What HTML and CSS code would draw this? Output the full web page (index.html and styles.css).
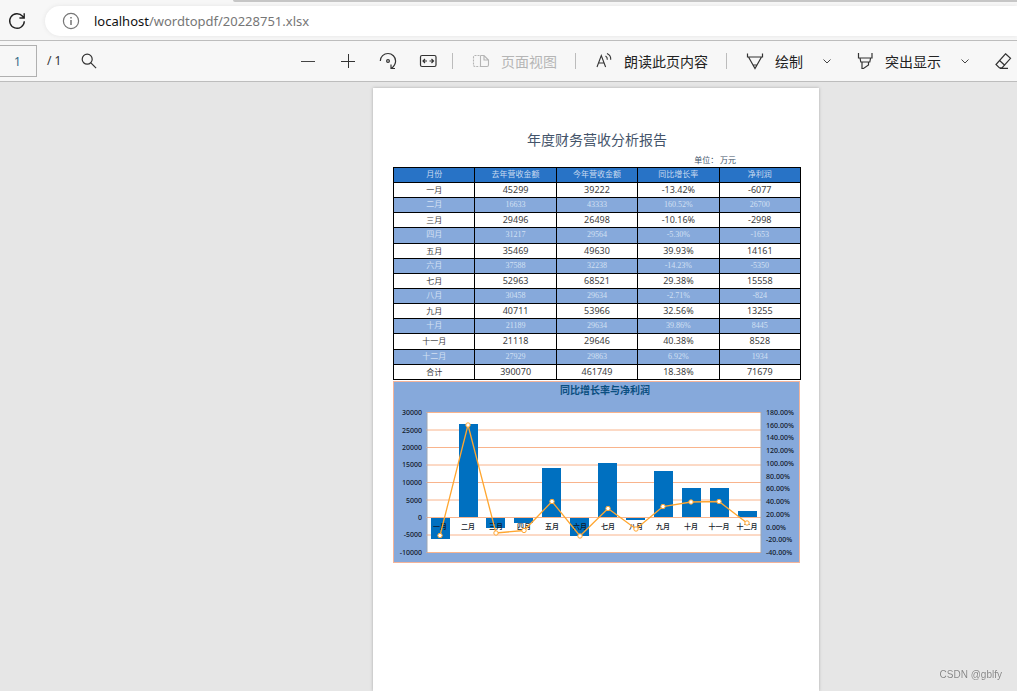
FILE: index.html
```
<!DOCTYPE html>
<html lang="zh-CN">
<head>
<meta charset="utf-8">
<title>20228751.xlsx</title>
<link rel="stylesheet" href="styles.css">
</head>
<body>
<header class="browser">
  <div class="tab-edge"></div>
  <div class="address-row">
    <button class="reload" aria-label="刷新">
      <svg width="20" height="20" viewBox="0 0 20 20" fill="none" stroke="#222" stroke-width="1.4"><path d="M17.3 10.2A7.3 7.3 0 1 1 15.6 5.3L17 6.7M17.2 2.2V7H12.4"/></svg>
    </button>
    <div class="address">
      <svg width="18" height="18" viewBox="0 0 18 18" fill="none" stroke="#767676" stroke-width="1.2"><circle cx="9" cy="9" r="7.6"/><path d="M9 8v5M9 5v1.5" stroke-width="1.5"/></svg>
      <span class="url"><span class="host">localhost</span>/wordtopdf/20228751.xlsx</span>
    </div>
  </div>
</header>

<nav class="toolbar">
  <div class="paging">
    <input class="page-input" type="text" value="1" aria-label="页码">
    <span class="page-total">/ 1</span>
    <button class="search" aria-label="查找"><svg width="16" height="16" viewBox="0 0 16 16" fill="none" stroke="#333" stroke-width="1.2"><circle cx="6.2" cy="6.2" r="5"/><path d="M9.9 9.9l5.2 5.2"/></svg></button>
  </div>
  <button class="tool icon-only" aria-label="缩小"><svg width="18" height="18" viewBox="0 0 18 18" fill="none" stroke="#444"><path d="M2 9.5h14"/></svg></button>
  <button class="tool icon-only" aria-label="放大"><svg width="18" height="18" viewBox="0 0 18 18" fill="none" stroke="#333"><path d="M2 9.5h14M9.5 2v14"/></svg></button>
  <button class="tool icon-only" aria-label="旋转"><svg width="18" height="18" viewBox="0 0 18 18" fill="none" stroke="#333" stroke-width="1.2"><path d="M1.300 9C1.300 4.600 4.800 1.500 9 1.500S16.600 5 16.600 9c0 3-1.200 5-4 7.300M12 12.500v4h4"/><circle cx="9" cy="9" r="1.400"/></svg></button>
  <button class="tool icon-only" aria-label="适应宽度"><svg width="18" height="18" viewBox="0 0 18 18" fill="none" stroke="#333" stroke-width="1.2"><rect x="1.500" y="3.500" width="15.500" height="11" rx="1.500"/><path d="M8 9H4M6 7L4 9l2 2M10.500 9h4M12.500 7l2 2-2 2"/></svg></button>
  <span class="separator"></span>
  <button class="tool" disabled><svg width="18" height="18" viewBox="0 0 18 18" fill="none" stroke="#b5b5b5" stroke-width="1.1"><path d="M7.500 3.500H3a1.500 1.500 0 0 0-1.500 1.500v8A1.500 1.500 0 0 0 3 14.500h4.500" stroke-dasharray="2 1"/><path d="M8.500 3.500v11h6.500a1.500 1.500 0 0 0 1.500-1.500V8l-4.500-4.500H8.500M12 3.500V8h4.500"/></svg>页面视图</button>
  <span class="separator"></span>
  <button class="tool"><svg width="18" height="18" viewBox="0 0 18 18" fill="none" stroke="#333" stroke-width="1.1"><path d="M2 15L6.300 3.500 10.600 15M3.500 11h5.700M10.500 4c1.400.8 2 2 1.800 3.700M12 1.500c2.800 1.400 4 3.700 3.700 6.200"/></svg>朗读此页内容</button>
  <span class="separator"></span>
  <button class="tool split"><svg width="18" height="18" viewBox="0 0 18 18" fill="none" stroke="#333" stroke-width="1.2"><path d="M1.500 1.500V5h15V1.500M2.500 5L9 16.500 15.500 5M7 13h4"/></svg>绘制</button>
  <button class="chevron" aria-label="绘制选项"><svg width="10" height="10" viewBox="0 0 10 10" fill="none" stroke="#444"><path d="M1.500 3.500L5 7l3.500-3.500"/></svg></button>
  <button class="tool split highlight"><svg width="18" height="18" viewBox="0 0 18 18" fill="none" stroke="#333" stroke-width="1.2"><path d="M2.500 1v5H16V1M4 6l.8 4h9l.8-4M6 10v6.500h1.500L12.500 13v-3"/></svg>突出显示</button>
  <button class="chevron" aria-label="突出显示选项"><svg width="10" height="10" viewBox="0 0 10 10" fill="none" stroke="#444"><path d="M1.500 3.500L5 7l3.500-3.500"/></svg></button>
  <button class="tool eraser" aria-label="擦除"><svg width="18" height="18" viewBox="0 0 18 18" fill="none" stroke="#333" stroke-width="1.2"><path d="M11.500 1.800l5 4.600-8.500 9.500H5.500L2 12.500zM5.500 8.500l5.500 5M6 16.400h8"/></svg></button>
</nav>

<main class="viewer">
  <article class="sheet">
    <h1 class="title">年度财务营收分析报告</h1>
    <p class="unit">单位： 万元</p>
    <table class="report">
      <thead><tr><th>月份</th><th>去年营收金额</th><th>今年营收金额</th><th>同比增长率</th><th>净利润</th></tr></thead>
      <tbody>
        <tr><th>一月</th><td>45299</td><td>39222</td><td>-13.42%</td><td>-6077</td></tr>
        <tr><th>二月</th><td>16633</td><td>43333</td><td>160.52%</td><td>26700</td></tr>
        <tr><th>三月</th><td>29496</td><td>26498</td><td>-10.16%</td><td>-2998</td></tr>
        <tr><th>四月</th><td>31217</td><td>29564</td><td>-5.30%</td><td>-1653</td></tr>
        <tr><th>五月</th><td>35469</td><td>49630</td><td>39.93%</td><td>14161</td></tr>
        <tr><th>六月</th><td>37588</td><td>32238</td><td>-14.23%</td><td>-5350</td></tr>
        <tr><th>七月</th><td>52963</td><td>68521</td><td>29.38%</td><td>15558</td></tr>
        <tr><th>八月</th><td>30458</td><td>29634</td><td>-2.71%</td><td>-824</td></tr>
        <tr><th>九月</th><td>40711</td><td>53966</td><td>32.56%</td><td>13255</td></tr>
        <tr><th>十月</th><td>21189</td><td>29634</td><td>39.86%</td><td>8445</td></tr>
        <tr><th>十一月</th><td>21118</td><td>29646</td><td>40.38%</td><td>8528</td></tr>
        <tr><th>十二月</th><td>27929</td><td>29863</td><td>6.92%</td><td>1934</td></tr>
        <tr><th>合计</th><td>390070</td><td>461749</td><td>18.38%</td><td>71679</td></tr>
      </tbody>
    </table>
    <svg class="chart" viewBox="0 0 408 182" role="img" aria-label="同比增长率与净利润">
      <rect class="chart-bg" x="0.500" y="0.500" width="406" height="181"/>
      <text class="chart-title" x="212" y="13">同比增长率与净利润</text>
      <rect x="34" y="31" width="334" height="140" fill="#fff"/>
      <path class="grid" d="M33 31.500H368M33 49H368M33 66.500H368M33 84H368M33 101.500H368M33 119H368M33 136.500H368M33 154H368M33 171.500H368"/>
      <path class="axis" d="M34 31v141M368 31v141"/>
      <g class="bars">
        <rect x="38" y="137" width="19" height="21"/><rect x="66" y="43" width="19" height="93"/>
        <rect x="93" y="137" width="19" height="10"/><rect x="121" y="137" width="19" height="5"/>
        <rect x="149" y="87" width="19" height="49"/><rect x="177" y="137" width="19" height="18"/>
        <rect x="205" y="82" width="19" height="54"/><rect x="233" y="137" width="19" height="2"/>
        <rect x="261" y="90" width="19" height="46"/><rect x="289" y="107" width="19" height="29"/>
        <rect x="317" y="107" width="19" height="29"/><rect x="345" y="130" width="19" height="6"/>
      </g>
      <g class="months">
        <text x="47" y="148">一月</text><text x="75" y="148">二月</text><text x="103" y="148">三月</text><text x="131" y="148">四月</text>
        <text x="159" y="148">五月</text><text x="187" y="148">六月</text><text x="215" y="148">七月</text><text x="243" y="148">八月</text>
        <text x="270" y="148">九月</text><text x="298" y="148">十月</text><text x="326" y="148">十一月</text><text x="354" y="148">十二月</text>
      </g>
      <g class="scale-left">
        <text x="29" y="34">30000</text><text x="29" y="52">25000</text><text x="29" y="69">20000</text>
        <text x="29" y="86">15000</text><text x="29" y="104">10000</text><text x="29" y="122">5000</text>
        <text x="29" y="139">0</text><text x="29" y="156">-5000</text><text x="29" y="174">-10000</text>
      </g>
      <g class="scale-right">
        <text x="373" y="34">180.00%</text><text x="373" y="47">160.00%</text><text x="373" y="59">140.00%</text>
        <text x="373" y="72">120.00%</text><text x="373" y="85">100.00%</text><text x="373" y="98">80.00%</text>
        <text x="373" y="110">60.00%</text><text x="373" y="123">40.00%</text><text x="373" y="136">20.00%</text>
        <text x="373" y="149">0.00%</text><text x="373" y="161">-20.00%</text><text x="373" y="174">-40.00%</text>
      </g>
      <polyline class="rate" points="47,154.500 75,44 103,152 131,149.500 159,120.500 187,155 215,127.500 243,148 270,125.500 298,121 326,120.500 354,142"/>
      <g class="points">
        <circle cx="47" cy="154.500" r="2.200"/><circle cx="75" cy="44" r="2.200"/><circle cx="103" cy="152" r="2.200"/><circle cx="131" cy="149.500" r="2.200"/>
        <circle cx="159" cy="120.500" r="2.200"/><circle cx="187" cy="155" r="2.200"/><circle cx="215" cy="127.500" r="2.200"/><circle cx="243" cy="148" r="2.200"/>
        <circle cx="270" cy="125.500" r="2.200"/><circle cx="298" cy="121" r="2.200"/><circle cx="326" cy="120.500" r="2.200"/><circle cx="354" cy="142" r="2.200"/>
      </g>
    </svg>
  </article>
</main>
<div class="watermark">CSDN @gblfy</div>
</body>
</html>
```

FILE: styles.css
```
* { box-sizing: border-box; }
body {
  margin: 0;
  height: 100vh;
  display: flex;
  flex-direction: column;
  overflow: hidden;
  background: #e6e6e6;
  font-family: "Noto Sans", "Noto Sans CJK SC", sans-serif;
}
button {
  border: 0;
  padding: 0;
  background: none;
  color: #222;
  font: inherit;
  display: flex;
  align-items: center;
  justify-content: center;
  flex: none;
}
svg { display: block; flex: none; }

.browser {
  flex: none;
  height: 41px;
  background: #f7f7f7;
  border-bottom: 1px solid #bdbdbd;
}
.tab-edge {
  height: 2px;
  margin-left: 233px;
  background: #c6c6c6;
  border-bottom-left-radius: 4px;
}
.address-row { display: flex; padding-top: 4px; }
.reload { width: 45px; height: 30px; padding-right: 11px; }
.address {
  flex: 1;
  height: 30px;
  padding-left: 17px;
  display: flex;
  align-items: center;
  gap: 14px;
  background: #fff;
  border-radius: 15px 0 0 15px;
  box-shadow: 0 0 4px #e4e4e4;
}
.url {
  font-family: "Noto Sans", sans-serif;
  font-size: 13px;
  line-height: 20px;
  color: #767676;
}
.host { color: #111; }

.toolbar {
  flex: none;
  height: 41px;
  display: flex;
  align-items: center;
  background: #f7f7f7;
  border-bottom: 1px solid #bdbdbd;
  font-size: 14px;
  line-height: 20px;
  overflow: hidden;
}
.paging {
  flex: 0 0 288px;
  display: flex;
  align-items: center;
  font-size: 12px;
  color: #333;
}
.page-input {
  width: 37px;
  height: 32px;
  padding: 0 1px 0 0;
  border: 1px solid #b0b0b0;
  border-left: 0;
  background: #f7f7f7;
  color: #336a86;
  font: inherit;
  text-align: center;
}
.page-total { width: 34px; margin-left: 10px; }
.tool {
  height: 32px;
  gap: 11px;
  padding: 0 18px 0 19px;
  white-space: nowrap;
  font-family: "Noto Sans CJK SC", sans-serif;
}
.tool:disabled { color: #b5b5b5; }
.tool.icon-only { width: 40px; padding: 0; }
.tool.split { padding-right: 12px; }
.tool.highlight, .tool.eraser { padding-left: 17px; }
.chevron { width: 24px; height: 32px; }
.separator { flex: none; width: 1px; height: 16px; background: #bcbcbc; }
.icon-only + .separator { margin-left: 4px; }

.viewer {
  flex: 1;
  min-height: 0;
  display: flex;
  justify-content: center;
  padding: 6px 0 0 175px;
}
.sheet {
  width: 446px;
  flex: none;
  padding: 41px 18px 0 20px;
  background: #fff;
  box-shadow: 0 0 3px #aaa;
}
.title {
  margin: 0;
  font-size: 14px;
  line-height: 20px;
  font-weight: 400;
  text-align: center;
  color: #44546a;
  font-family: "Noto Sans CJK SC", sans-serif;
}
.unit {
  margin: 5px 65px 1px 0;
  font-size: 8px;
  line-height: 12px;
  text-align: right;
  color: #44546a;
  font-family: "Noto Sans CJK SC", sans-serif;
}
.report {
  width: 100%;
  height: 213px;
  table-layout: fixed;
  border-collapse: collapse;
  font-size: 9px;
  line-height: 12px;
  color: #404040;
  text-align: center;
}
.report tr { height: 15px; }
.report th, .report td { padding: 0; border: 1px solid #000; font-weight: 400; }
.report th { font-size: 8px; }
.report thead th {
  background: #2873c6;
  color: #c9daf0;
  font-family: "Liberation Serif", "Noto Sans CJK SC", serif;
}
.report tbody tr:nth-child(even) { background: #86a9db; color: #d3e0f3; }
.report tbody tr:nth-child(even) > * {
  font-family: "Liberation Serif", "Noto Sans CJK SC", serif;
  font-size: 8px;
}

.chart { width: 100%; margin-top: 1px; }
.chart text { font-size: 7px; font-weight: 500; fill: #101828; }
.chart .chart-title { font-size: 10px; font-weight: 700; text-anchor: middle; fill: #0b4f80; }
.chart-bg { fill: #86a9db; stroke: #f4b49a; }
.grid { fill: none; stroke: #f9b48c; }
.axis { fill: none; stroke: #9aa5b4; }
.bars { fill: #0070c0; }
.months { text-anchor: middle; }
.scale-left { text-anchor: end; }
.rate { fill: none; stroke: #ffa630; stroke-width: 1.3; }
.points { fill: #fff; stroke: #ffa630; }

.watermark {
  position: fixed;
  right: 15px;
  bottom: 8px;
  font: 10px/16px "Liberation Sans", sans-serif;
  color: #858585;
  text-shadow: 0 0 1px #fff;
}
```
